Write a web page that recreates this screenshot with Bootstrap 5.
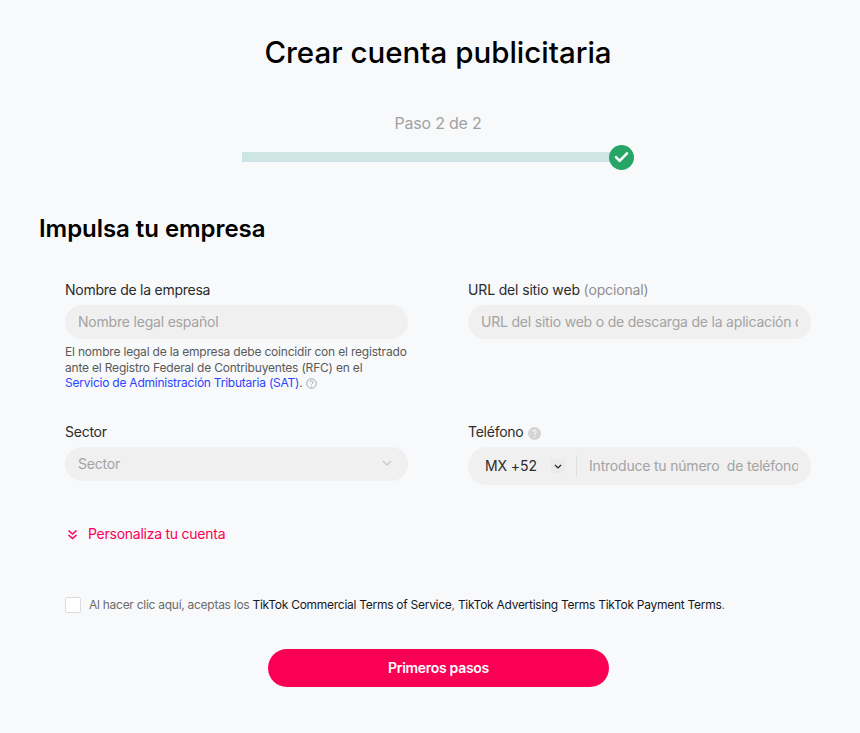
<!DOCTYPE html>
<html lang="es">
<head>
    <meta charset="UTF-8">
    <meta name="viewport" content="width=device-width, initial-scale=1.0">
    <title>Crear cuenta publicitaria</title>
    <link href="https://cdn.jsdelivr.net/npm/bootstrap@5.3.0/dist/css/bootstrap.min.css" rel="stylesheet">
    <style>
        body { background: #f8f9fb; font-family: Inter, "Liberation Sans", sans-serif; color: #161823; overflow: hidden; }
        .page-title { font-size: 29.5px; line-height: 36px; font-weight: 500; color: #000; margin: 0; padding: 34px 0 0 16px; }
        .step-text { font-size: 16px; line-height: 22px; color: #a1a1a1; margin: 0; padding: 42px 0 0 16px; letter-spacing: -.2px; }
        .step-track { width: 392px; height: 26px; margin: 10px 0 0 242px; }
        .step-bar { height: 10px; background: #cee5e5; }
        .step-check { width: 25px; height: 25px; background: #27a567; margin-left: -12px; }
        .section-title { font-size: 24px; line-height: 32px; font-weight: 600; color: #000; margin: 0; padding: 43px 0 0 39px; letter-spacing: -.05px; }
        .form-area { padding: 35px 49px 0 65px; display: grid; grid-template-columns: 343px 343px; column-gap: 60px; }
        .field-label { font-size: 14px; line-height: 20px; color: #2b2b2b; margin-bottom: 5px; display: block; letter-spacing: -.25px; }
        .url-label { letter-spacing: -.15px; }
        .field-opt { color: #8f8f8f; }
        .help-icon { margin-left: 1px; }
        .pill-input.form-control { height: 34px; background: #f0f0f0; border: 0; border-radius: 17px; padding: 0 13px 2px; font-size: 14px; letter-spacing: -.2px; }
        .pill-input.form-control::placeholder { color: #a3a3a3; }
        .help-text { font-size: 12px; line-height: 15.5px; color: #595959; margin: 5px 0 0; height: 78px; letter-spacing: -.19px; }
        .help-text a { color: #2b44ff; text-decoration: none; letter-spacing: -.23px; }
        .sector-box { height: 34px; background: #f0f0f0; border-radius: 17px; padding: 0 16px 2px 13px; font-size: 14px; color: #a3a3a3; letter-spacing: -.2px; }
        .phone-box { height: 38px; background: #f0f0f0; border-radius: 19px; padding: 0 13px 0 17px; }
        .phone-code { font-size: 14px; color: #2b2b2b; width: 66px; white-space: nowrap; letter-spacing: -.1px; padding-bottom: 2px; }
        .phone-caret { width: 14px; height: 14px; background: #ebebeb; }
        .phone-sep { width: 1px; height: 22px; background: #e0e0e0; margin: 0 12px 0 11px; }
        .phone-input { background: transparent; border: 0; outline: 0; font-size: 14px; min-width: 0; padding: 0 0 2px; letter-spacing: -.2px; }
        .phone-input::placeholder { color: #a3a3a3; opacity: 1; }
        .custom-link { font-size: 14px; line-height: 20px; color: #fa0055; padding: 39px 0 0 65px; letter-spacing: -.25px; }
        .terms-row { padding: 52px 0 0 65px; font-size: 12px; color: #6b6b6b; letter-spacing: -.27px; }
        .terms-box { width: 16px; height: 16px; background: #fff; border: 1px solid #dcdcdc; border-radius: 2px; margin-right: 8px; }
        .terms-row b { font-weight: 400; color: #161823; }
        .start-btn.btn { width: 341px; height: 38px; border-radius: 19px; background: #fa0055; border: 0; color: #fff; font-size: 14px; font-weight: 600; margin: 35px 0 0 268px; padding: 0 0 2px; letter-spacing: -.3px; }
    </style>
</head>
<body>
    <h1 class="page-title text-center">Crear cuenta publicitaria</h1>
    <p class="step-text text-center">Paso 2 de 2</p>
    <div class="step-track d-flex align-items-center">
        <div class="step-bar flex-grow-1"></div>
        <div class="step-check rounded-circle d-flex align-items-center justify-content-center flex-shrink-0">
            <svg width="15" height="12" viewBox="0 0 15 12"><path d="M2 6.2l3.6 3.6L13 2.4" fill="none" stroke="#fff" stroke-width="2.6" stroke-linecap="round" stroke-linejoin="round"/></svg>
        </div>
    </div>

    <h2 class="section-title">Impulsa tu empresa</h2>

    <form class="form-area">
        <div>
            <label class="field-label" for="nombre">Nombre de la empresa</label>
            <input class="form-control pill-input" id="nombre" placeholder="Nombre legal español">
            <p class="help-text">El nombre legal de la empresa debe coincidir con el registrado<br>ante el Registro Federal de Contribuyentes (RFC) en el<br><a href="#">Servicio de Administración Tributaria (SAT)</a>.
                <svg width="11" height="11" viewBox="0 0 11 11"><circle cx="5.5" cy="5.5" r="4.8" fill="none" stroke="#8f8f8f" stroke-width=".8"/><path d="M4 4.3a1.5 1.5 0 1 1 2.3 1.3c-.5.3-.8.6-.8 1.1" fill="none" stroke="#8f8f8f" stroke-width=".8"/><circle cx="5.5" cy="8.2" r=".5" fill="#8f8f8f"/></svg>
            </p>
        </div>
        <div>
            <label class="field-label url-label" for="url">URL del sitio web <span class="field-opt">(opcional)</span></label>
            <input class="form-control pill-input" id="url" placeholder="URL del sitio web o de descarga de la aplicación del negocio">
        </div>
        <div>
            <label class="field-label">Sector</label>
            <div class="sector-box d-flex align-items-center justify-content-between">
                <span>Sector</span>
                <svg width="10" height="6" viewBox="0 0 10 6"><path d="M1 1l4 4 4-4" fill="none" stroke="#c4c4c4" stroke-width="1.1"/></svg>
            </div>
        </div>
        <div>
            <label class="field-label">Teléfono
                <svg class="help-icon" width="13" height="13" viewBox="0 0 13 13"><circle cx="6.5" cy="6.5" r="6.5" fill="#d4d4d4"/><path d="M4.8 5a1.7 1.7 0 1 1 2.6 1.5c-.6.4-.9.6-.9 1.2" fill="none" stroke="#f8f9fb" stroke-width="1.1"/><circle cx="6.5" cy="9.6" r=".7" fill="#f8f9fb"/></svg>
            </label>
            <div class="phone-box d-flex align-items-center">
                <span class="phone-code flex-shrink-0">MX +52</span>
                <span class="phone-caret d-flex align-items-center justify-content-center flex-shrink-0">
                    <svg width="8" height="5" viewBox="0 0 8 5"><path d="M1 1l3 3 3-3" fill="none" stroke="#222" stroke-width="1.2"/></svg>
                </span>
                <span class="phone-sep flex-shrink-0"></span>
                <input class="phone-input flex-grow-1" placeholder="Introduce tu número  de teléfono móvil">
            </div>
        </div>
    </form>

    <div class="custom-link d-flex align-items-center gap-1">
        <svg width="15" height="15" viewBox="0 0 15 15"><path d="M3.5 3.5l4 3.5 4-3.5M3.5 8l4 3.5 4-3.5" fill="none" stroke="#fa0055" stroke-width="1.5"/></svg>
        <span class="ms-1">Personaliza tu cuenta</span>
    </div>

    <div class="terms-row d-flex align-items-center">
        <span class="terms-box flex-shrink-0"></span>
        <span>Al hacer clic aquí, aceptas los <b>TikTok Commercial Terms of Service</b>, <b>TikTok Advertising Terms</b> <b>TikTok Payment Terms</b>.</span>
    </div>

    <button type="button" class="btn start-btn d-block">Primeros pasos</button>

    <script src="https://cdn.jsdelivr.net/npm/bootstrap@5.3.0/dist/js/bootstrap.bundle.min.js"></script>
</body>
</html>
